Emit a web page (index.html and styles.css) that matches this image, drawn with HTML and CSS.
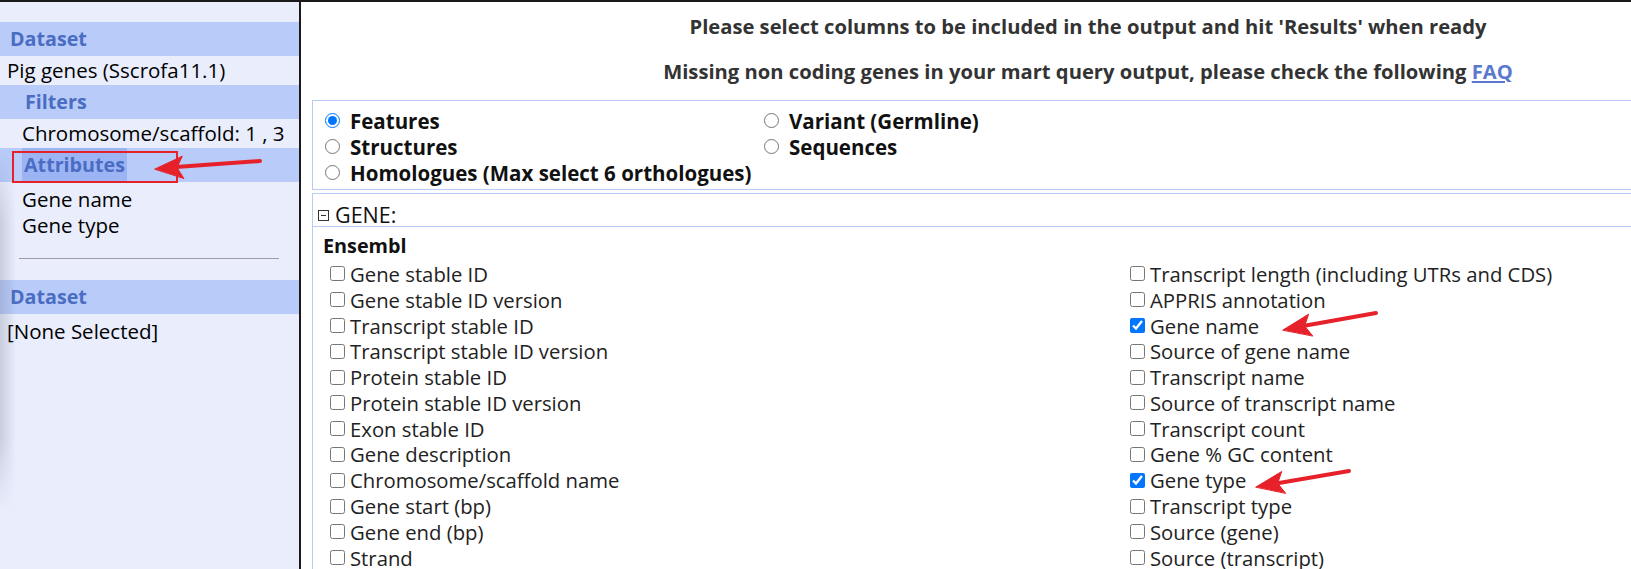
FILE: index.html
```html
<!DOCTYPE html>
<html>
<head>
<meta charset="utf-8">
<title>BioMart attributes</title>
<link rel="stylesheet" href="styles.css">
</head>
<body>
<div class="page">
  <aside class="summary">
    <div class="band">Dataset</div>
    <div class="row">Pig genes (Sscrofa11.1)</div>
    <div class="band sub">Filters</div>
    <div class="row sub">Chromosome/scaffold: 1 , 3</div>
    <div class="band sub"><span class="sel">Attributes</span></div>
    <div class="row sub tight first">Gene name</div>
    <div class="row sub tight">Gene type</div>
    <div class="sep"></div>
    <div class="band">Dataset</div>
    <div class="row last">[None Selected]</div>
  </aside>
  <main class="main">
    <p class="msg">Please select columns to be included in the output and hit 'Results' when ready</p>
    <p class="msg">Missing non coding genes in your mart query output, please check the following <a href="#">FAQ</a></p>
    <div class="box pages">
      <label class="opt"><input type="radio" name="page" checked> Features</label>
      <label class="opt"><input type="radio" name="page"> Variant (Germline)</label>
      <label class="opt"><input type="radio" name="page"> Structures</label>
      <label class="opt"><input type="radio" name="page"> Sequences</label>
      <label class="opt wide"><input type="radio" name="page"> Homologues (Max select 6 orthologues)</label>
    </div>
    <div class="box gene">
      <div class="gene-head"><span class="toggle"></span>GENE:</div>
      <div class="group-title">Ensembl</div>
      <div class="cols">
        <ul class="attrs">
          <li><label><input type="checkbox">Gene stable ID</label></li>
          <li><label><input type="checkbox">Gene stable ID version</label></li>
          <li><label><input type="checkbox">Transcript stable ID</label></li>
          <li><label><input type="checkbox">Transcript stable ID version</label></li>
          <li><label><input type="checkbox">Protein stable ID</label></li>
          <li><label><input type="checkbox">Protein stable ID version</label></li>
          <li><label><input type="checkbox">Exon stable ID</label></li>
          <li><label><input type="checkbox">Gene description</label></li>
          <li><label><input type="checkbox">Chromosome/scaffold name</label></li>
          <li><label><input type="checkbox">Gene start (bp)</label></li>
          <li><label><input type="checkbox">Gene end (bp)</label></li>
          <li><label><input type="checkbox">Strand</label></li>
        </ul>
        <ul class="attrs">
          <li><label><input type="checkbox">Transcript length (including UTRs and CDS)</label></li>
          <li><label><input type="checkbox">APPRIS annotation</label></li>
          <li><label><input type="checkbox" checked>Gene name</label></li>
          <li><label><input type="checkbox">Source of gene name</label></li>
          <li><label><input type="checkbox">Transcript name</label></li>
          <li><label><input type="checkbox">Source of transcript name</label></li>
          <li><label><input type="checkbox">Transcript count</label></li>
          <li><label><input type="checkbox">Gene % GC content</label></li>
          <li><label><input type="checkbox" checked>Gene type</label></li>
          <li><label><input type="checkbox">Transcript type</label></li>
          <li><label><input type="checkbox">Source (gene)</label></li>
          <li><label><input type="checkbox">Source (transcript)</label></li>
        </ul>
      </div>
    </div>
  </main>
</div>
<div class="edge-shadow"></div>
<div class="red-box"></div>
<svg class="annot" width="1631" height="569" viewBox="0 0 1631 569">
  <g fill="#e62129" stroke="#e62129" stroke-linecap="round" stroke-linejoin="round">
    <line x1="260" y1="161" x2="176" y2="167" stroke-width="4"/>
    <polygon points="155,169 182.3,156.2 177,167.5 183.7,178.2" stroke-width="1"/>
    <line x1="1376" y1="313" x2="1303" y2="326" stroke-width="4"/>
    <polygon points="1283,330 1308.6,314.2 1304.6,326 1312.6,335.8" stroke-width="1"/>
    <line x1="1349" y1="471" x2="1276" y2="483.5" stroke-width="4"/>
    <polygon points="1256,487 1281.7,471.5 1277.7,483.3 1285.5,493.1" stroke-width="1"/>
  </g>
</svg>
</body>
</html>
```

FILE: styles.css
```css
html, body {
  margin: 0;
  padding: 0;
  width: 1631px;
  height: 569px;
  overflow: hidden;
  background: #ffffff;
  font-family: "Open Sans", "Noto Sans", sans-serif;
  color: #111;
}

.page {
  display: flex;
  height: 569px;
  border-top: 2px solid #1a1a1a;
  box-sizing: border-box;
}

/* ---------- left summary panel ---------- */
.summary {
  width: 299px;
  flex: none;
  background: #e9edfc;
  border-right: 2px solid #1a1a1a;
  padding-top: 20px;
  font-size: 20.5px;
}

.band {
  height: 34px;
  line-height: 34px;
  background: #b8cbf9;
  color: #4a6dc3;
  font-weight: 700;
  font-size: 19.7px;
  padding-left: 10px;
}
.band.sub { padding-left: 25px; }

.sel {
  background: #9db4f4;
  padding: 3px 2px;
  margin-left: -3px;
}

.row {
  height: 29px;
  line-height: 29px;
  padding-left: 7px;
  color: #000;
  white-space: nowrap;
}
.row.sub { padding-left: 22px; }
.row.tight { height: 26px; line-height: 26px; }
.row.first { margin-top: 4px; }
.row.last { height: 34px; line-height: 34px; }

.sep {
  height: 1px;
  background: #9c9ca4;
  margin: 20px 20px 21px 19px;
}

/* ---------- main area ---------- */
.main {
  flex: none;
  width: 1560px;
  padding-left: 11px;
}

.msg {
  margin: 0;
  width: 1552px;
  text-align: center;
  font-weight: 700;
  font-size: 20.2px;
  color: #333;
  height: 45px;
  line-height: 45px;
  white-space: nowrap;
}
.msg:first-child { margin-top: 2px; }
.msg a { color: #5b78cf; }

.box {
  border: 1px solid #b9cbf8;
  border-right: none;
  width: 1560px;
}

.pages {
  display: grid;
  grid-template-columns: 439px 1fr;
  grid-auto-rows: 25.8px;
  padding-top: 7px;
  box-sizing: border-box;
  height: 90px;
  margin-top: 6px;
  margin-bottom: 3px;
}
.opt {
  font-weight: 700;
  font-size: 20.5px;
  color: #111;
  display: flex;
  align-items: center;
  padding-left: 12px;
  white-space: nowrap;
}
.opt input {
  margin: 0 10px 0 0;
  width: 15px;
  height: 15px;
}
.opt.wide { grid-column: 1 / 3; }

.gene {
  height: 400px;
}
.gene-head {
  height: 24px;
  padding-top: 8px;
  border-bottom: 1px solid #b9cbf8;
  font-size: 21.5px;
  color: #111;
  display: flex;
  align-items: center;
  padding-left: 5px;
}
.toggle {
  width: 9px;
  height: 9px;
  border: 1px solid #333;
  position: relative;
  margin-right: 6px;
  margin-top: 2px;
}
.toggle::after {
  content: "";
  position: absolute;
  left: 2px;
  right: 2px;
  top: 4px;
  height: 1px;
  background: #333;
}

.group-title {
  font-weight: 700;
  font-size: 19.8px;
  padding-left: 10px;
  height: 34px;
  line-height: 38px;
  color: #111;
}

.cols {
  display: grid;
  grid-template-columns: 800px 600px;
  padding-left: 17px;
}
.attrs {
  list-style: none;
  margin: 0;
  padding: 0;
}
.attrs li {
  height: 25.8px;
  display: flex;
  align-items: center;
  font-size: 20.3px;
  color: #222;
  white-space: nowrap;
}
.attrs label {
  display: flex;
  align-items: center;
}
.attrs input {
  margin: 0 5px 0 0;
  width: 15px;
  height: 15px;
}

/* ---------- annotations overlaid on the screenshot ---------- */
.edge-shadow {
  position: absolute;
  left: 0;
  top: 150px;
  width: 16px;
  height: 360px;
  background: linear-gradient(to right, rgba(90, 95, 120, 0.22), rgba(90, 95, 120, 0));
  -webkit-mask-image: linear-gradient(to bottom, transparent, #000 20%, #000 80%, transparent);
  mask-image: linear-gradient(to bottom, transparent, #000 20%, #000 80%, transparent);
  pointer-events: none;
}

.red-box {
  position: absolute;
  left: 12px;
  top: 151px;
  width: 162px;
  height: 28px;
  border: 2px solid #e62129;
  pointer-events: none;
}

.annot {
  position: absolute;
  left: 0;
  top: 0;
  pointer-events: none;
}
```
